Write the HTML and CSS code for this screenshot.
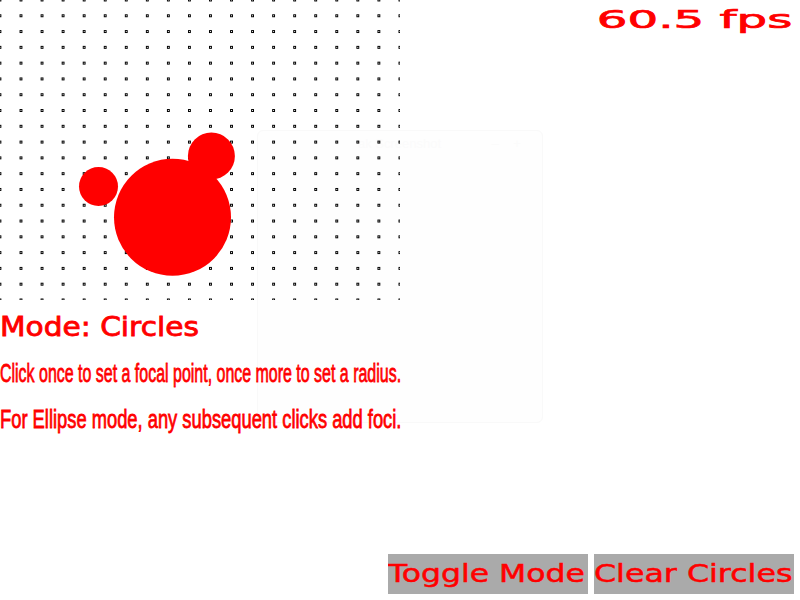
FILE: index.html
```html
<!DOCTYPE html>
<html lang="en">
<head>
<meta charset="utf-8">
<title>Circles</title>
<link rel="stylesheet" href="styles.css">
</head>
<body>
<div class="page">
  <div class="ghost" aria-hidden="true">
    <div class="ghost-bar"><span class="ghost-title">ak Screenshot</span><span class="ghost-ctl">–</span><span class="ghost-ctl">+</span></div>
  </div>
  <div class="top">
    <div class="sketch">
      <svg class="canvas" width="400" height="300" viewBox="0 0 400 300" shape-rendering="crispEdges">
        <defs>
          <pattern id="dots" patternUnits="userSpaceOnUse" x="-1.5" y="-1.5" width="21.0526" height="15.7895">
            <path d="M0 0h3v3h-3z M1 1v1h1v-1z" fill="#000" fill-rule="evenodd"/>
          </pattern>
        </defs>
        <rect width="400" height="300" fill="url(#dots)"/>
        <g fill="#ff0000" shape-rendering="auto">
          <circle cx="98.5" cy="186.5" r="19.5"/>
          <circle cx="172.5" cy="217.3" r="58.5"/>
          <circle cx="211.4" cy="156" r="23.5"/>
        </g>
      </svg>
      <div class="mode"><span class="fit fit-mode">Mode: Circles</span></div>
      <p class="hint"><span class="fit fit-hint1">Click once to set a focal point, once more to set a radius.</span></p>
      <p class="hint"><span class="fit fit-hint2">For Ellipse mode, any subsequent clicks add foci.</span></p>
    </div>
    <div class="fps"><span class="fit fit-fps">60.5 fps</span></div>
  </div>
  <div class="controls">
    <button class="btn" type="button"><span class="fit fit-toggle">Toggle Mode</span></button>
    <button class="btn" type="button"><span class="fit fit-clear">Clear Circles</span></button>
  </div>
</div>
</body>
</html>
```
FILE: styles.css
```css
html, body {
  margin: 0;
  padding: 0;
  background: #ffffff;
}
body {
  width: 800px;
  height: 600px;
  overflow: hidden;
}
.page {
  position: relative;
  width: 800px;
  height: 600px;
  display: flex;
  flex-direction: column;
  color: #ff0000;
}
.top {
  display: flex;
  justify-content: space-between;
  align-items: flex-start;
}
.sketch {
  width: 400px;
}
.canvas {
  display: block;
  width: 400px;
  height: 300px;
}
.fit {
  display: inline-block;
  white-space: nowrap;
  transform-origin: 0 50%;
  -webkit-text-stroke: 0.5px #ff0000;
}
.mode {
  font-family: "DejaVu Sans", sans-serif;
  font-size: 26px;
  padding-top: 4px;
  line-height: 46px;
  height: 46px;
}
.mode .fit { -webkit-text-stroke: 0.8px #ff0000; }
.fit-mode { transform: scaleX(1.14); }
.hint {
  margin: 0;
  font-family: "Liberation Sans", Arial, sans-serif;
  font-size: 26px;
  line-height: 46px;
  height: 46px;
}
.hint .fit { -webkit-text-stroke: 0.8px #ff0000; }
.fit-hint1 { transform: scaleX(0.614); }
.fit-hint2 { transform: scaleX(0.705); }
.fps {
  font-family: "DejaVu Sans", sans-serif;
  font-size: 25px;
  line-height: 29px;
  padding-top: 5px;
  padding-right: 8px;
  text-align: right;
}
.fit-fps {
  transform-origin: 100% 50%;
  transform: scaleX(1.93);
  -webkit-text-stroke: 0.7px #ff0000;
}
.controls {
  margin-top: auto;
  display: flex;
  justify-content: flex-end;
  gap: 6px;
  padding: 0 6px 6px 0;
}
.btn {
  width: 200px;
  height: 40px;
  margin: 0;
  padding: 0;
  border: none;
  border-radius: 0;
  background: #aaaaaa;
  color: #ff0000;
  font-family: "DejaVu Sans", sans-serif;
  font-size: 24px;
  line-height: 40px;
  text-align: left;
  overflow: hidden;
}
.fit-toggle { transform: scaleX(1.31); }
.fit-clear { transform: scaleX(1.32); }
.ghost {
  position: absolute;
  left: 257px;
  top: 130px;
  width: 284px;
  height: 291px;
  border: 1px solid #f9f9f9;
  border-radius: 6px;
  background: #fefefe;
  z-index: 0;
}
.top, .controls {
  position: relative;
  z-index: 1;
}
.ghost-bar {
  display: flex;
  align-items: center;
  height: 24px;
  padding: 0 14px 0 100px;
  font-family: "Liberation Sans", Arial, sans-serif;
  font-size: 13px;
  color: #fbfbfb;
}
.ghost-title {
  flex: 1;
}
.ghost-ctl {
  width: 22px;
  text-align: center;
}
```
